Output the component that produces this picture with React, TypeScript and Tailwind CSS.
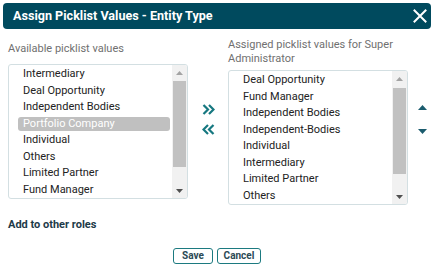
import React from 'react';

const available = [
  'Intermediary',
  'Deal Opportunity',
  'Independent Bodies',
  'Portfolio Company',
  'Individual',
  'Others',
  'Limited Partner',
  'Fund Manager',
];

const assigned = [
  'Deal Opportunity',
  'Fund Manager',
  'Independent Bodies',
  'Independent-Bodies',
  'Individual',
  'Intermediary',
  'Limited Partner',
  'Others',
];

const ScrollBar = ({ thumbTop, thumbHeight }: { thumbTop: number; thumbHeight: number }) => (
  <div className="flex flex-col w-[15px] h-full bg-[#f1f1f1]">
    <div className="flex justify-center items-center h-[15px]">
      <svg width="7" height="4" viewBox="0 0 7 4">
        <polygon points="0,4 3.5,0 7,4" fill="#a3a3a3" />
      </svg>
    </div>
    <div className="flex-1 relative">
      <div className="absolute left-[1px] right-[1px] bg-[#c1c1c1]" style={{ top: thumbTop, height: thumbHeight }} />
    </div>
    <div className="flex justify-center items-center h-[15px]">
      <svg width="7" height="4" viewBox="0 0 7 4">
        <polygon points="0,0 7,0 3.5,4" fill="#505050" />
      </svg>
    </div>
  </div>
);

const ListBox = ({ items, selected, thumbTop, thumbHeight }: { items: string[]; selected?: string; thumbTop: number; thumbHeight: number }) => (
  <div className="flex h-[135px] w-[180px] border border-[#d3dfe2] rounded-[3px] overflow-hidden bg-white">
    <div className="flex-1 flex flex-col pt-[1px] pl-[9px] pr-[2px]">
      {items.map((item) => (
        <div key={item} className="h-[16.6px] flex items-center">
          <div
            className={
              item === selected
                ? 'w-full h-[14px] leading-[14px] px-[5px] rounded-[3px] bg-[#c0c0c0] text-white'
                : 'w-full h-[14px] leading-[14px] px-[5px] text-[#222]'
            }
          >
            {item}
          </div>
        </div>
      ))}
    </div>
    <ScrollBar thumbTop={thumbTop} thumbHeight={thumbHeight} />
  </div>
);

export default function App() {
  return (
    <div className="w-[434px] h-[272px] bg-white pt-[3px] px-[3px] text-[11px]" style={{ fontFamily: 'Roboto, "Liberation Sans", sans-serif' }}>
      <div className="flex items-center justify-between h-[26px] rounded-[4px] bg-[#004a5e] pl-[10px] pr-[4px]">
        <span className="text-white font-bold text-[12.6px]">Assign Picklist Values - Entity Type</span>
        <svg width="14" height="14" viewBox="0 0 14 14">
          <path d="M1.5 1.5 L12.5 12.5 M12.5 1.5 L1.5 12.5" stroke="white" strokeWidth="2" strokeLinecap="square" />
        </svg>
      </div>

      <div className="flex pl-[5px] mt-[9px]">
        <div className="flex flex-col w-[180px]">
          <div className="h-[14px] leading-[14px] mt-[4px] text-[#707070]">Available picklist values</div>
          <div className="mt-[8px]">
            <ListBox items={available} selected="Portfolio Company" thumbTop={1} thumbHeight={86} />
          </div>
        </div>

        <div className="w-[40px] flex flex-col items-center pt-[66px] gap-[9px]">
          <svg width="13" height="11" viewBox="0 0 13 11">
            <path d="M1.5 1 L6 5.5 L1.5 10 M7 1 L11.5 5.5 L7 10" stroke="#167880" strokeWidth="2.2" fill="none" />
          </svg>
          <svg width="13" height="11" viewBox="0 0 13 11">
            <path d="M11.5 1 L7 5.5 L11.5 10 M6 1 L1.5 5.5 L6 10" stroke="#167880" strokeWidth="2.2" fill="none" />
          </svg>
        </div>

        <div className="flex flex-col w-[180px]">
          <div className="leading-[14px] text-[#707070] pr-[10px]">Assigned picklist values for Super Administrator</div>
          <div className="mt-[4px]">
            <ListBox items={assigned} thumbTop={2} thumbHeight={86} />
          </div>
        </div>

        <div className="flex flex-col items-center pl-[10px] pt-[67px] gap-[19px]">
          <svg width="9" height="5" viewBox="0 0 9 5">
            <polygon points="0,5 4.5,0 9,5" fill="#1b5c6e" />
          </svg>
          <svg width="9" height="5" viewBox="0 0 9 5">
            <polygon points="0,0 9,0 4.5,5" fill="#1b5c6e" />
          </svg>
        </div>
      </div>

      <div className="pl-[5px] mt-[12px] font-bold text-[#1d3a48]">Add to other roles</div>

      <div className="flex justify-center gap-[4px] mt-[14px]">
        <button className="w-[40px] h-[16px] border-[1.5px] border-[#1c7a80] rounded-[3px] text-[10px] font-bold text-[#2b4a56] leading-none">Save</button>
        <button className="w-[44px] h-[16px] border-[1.5px] border-[#1c7a80] rounded-[3px] text-[10px] font-bold text-[#2b4a56] leading-none">Cancel</button>
      </div>
    </div>
  );
}
